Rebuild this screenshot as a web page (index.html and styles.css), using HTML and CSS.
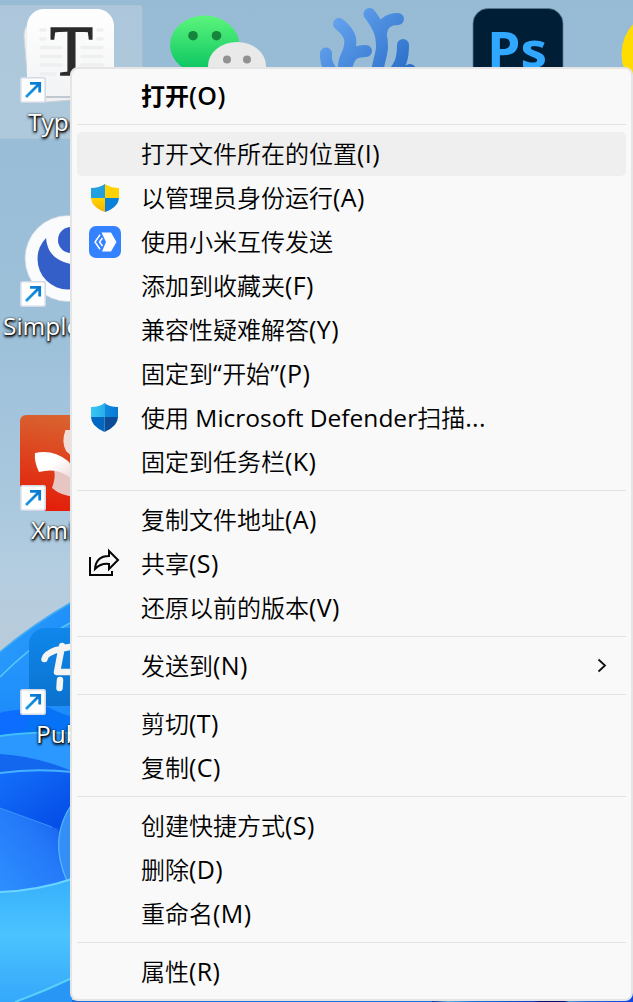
FILE: index.html
```html
<!DOCTYPE html>
<html lang="zh-CN">
<head>
<meta charset="utf-8">
<title>桌面</title>
<link rel="stylesheet" href="styles.css">
</head>
<body>
<main class="desktop">
<svg class="wallpaper" viewBox="0 0 633 1002" aria-hidden="true">
  <defs>
    <linearGradient id="sky" x1="0" y1="0" x2="0" y2="1"><stop offset="0" stop-color="#97bbd5"/><stop offset=".35" stop-color="#9ec1da"/><stop offset=".5" stop-color="#a9c8de"/><stop offset=".57" stop-color="#b4cde0"/><stop offset=".65" stop-color="#b9cbda"/></linearGradient>
    <linearGradient id="petalA" x1="0" y1="0" x2=".4" y2="1"><stop offset="0" stop-color="#2b9dfc"/><stop offset="1" stop-color="#0b7bf5"/></linearGradient>
    <linearGradient id="petalB" x1="0" y1="0" x2="0" y2="1"><stop offset="0" stop-color="#2a9cfb"/><stop offset="1" stop-color="#1684fa"/></linearGradient>
    <linearGradient id="petalC" x1="0" y1="0" x2=".5" y2="1"><stop offset="0" stop-color="#1470fb"/><stop offset="1" stop-color="#0041e0"/></linearGradient>
    <linearGradient id="petalD" x1="0" y1="1" x2="1" y2="0"><stop offset="0" stop-color="#2e91ff"/><stop offset=".6" stop-color="#2478f8"/><stop offset="1" stop-color="#1157ea"/></linearGradient>
    <linearGradient id="petalE" x1="0" y1="0" x2="0" y2="1"><stop offset="0" stop-color="#37b0fd"/><stop offset=".45" stop-color="#4bc3fe"/><stop offset="1" stop-color="#35a8fb"/></linearGradient>
    <linearGradient id="wechat" x1="0" y1="0" x2="0" y2="1"><stop offset="0" stop-color="#5cf57c"/><stop offset="1" stop-color="#05c160"/></linearGradient>
    <linearGradient id="coral" gradientUnits="userSpaceOnUse" x1="330" y1="10" x2="400" y2="80"><stop offset="0" stop-color="#6aa8f2"/><stop offset="1" stop-color="#2a6ec8"/></linearGradient>
    <linearGradient id="xmind" x1=".3" y1="0" x2=".1" y2="1"><stop offset="0" stop-color="#d9622f"/><stop offset="1" stop-color="#e41a08"/></linearGradient>
    <linearGradient id="pub" x1="0" y1="0" x2="0" y2="1"><stop offset="0" stop-color="#0f87ec"/><stop offset="1" stop-color="#0b72cd"/></linearGradient>
    <linearGradient id="arrow" x1="0" y1="1" x2="1" y2="0"><stop offset="0" stop-color="#1d9ce0"/><stop offset="1" stop-color="#0878d2"/></linearGradient>
    <linearGradient id="paper" x1="0" y1="0" x2="0" y2="1"><stop offset="0" stop-color="#fff"/><stop offset="1" stop-color="#f2f3f4"/></linearGradient>
    <linearGradient id="leaf" x1="0" y1="0" x2="1" y2="1"><stop offset=".4" stop-color="#fff"/><stop offset="1" stop-color="#e9cfcc"/></linearGradient>
    <linearGradient id="edge"><stop offset="0" stop-color="#0a2ca0"/><stop offset=".08" stop-color="#5bb0d8"/><stop offset=".2" stop-color="#1d6de0"/><stop offset=".5" stop-color="#0a3ec8"/><stop offset=".54" stop-color="#0a1070"/><stop offset=".66" stop-color="#0a1070"/><stop offset=".68" stop-color="#4a9ad0"/><stop offset=".78" stop-color="#2262d8"/><stop offset="1" stop-color="#0a40e8"/></linearGradient>
    <g id="shortcut">
      <rect x=".8" y=".8" width="24.4" height="24.4" rx="1.5" fill="#fff" stroke="#d3d9e7" stroke-width="1.6"/>
      <path d="M6 20 19.5 6.5M10 6.3H19.7V15.5" fill="none" stroke="url(#arrow)" stroke-width="2.8"/>
    </g>
  </defs>
  <rect width="633" height="1002" fill="url(#sky)"/>

  <path d="M0 652Q32 625 72 602V1002H0Z" fill="url(#petalA)"/>
  <path d="M0 652Q32 625 72 602" fill="none" stroke="#42adf5" stroke-width="1.5"/>
  <path d="M0 677Q36 641 72 622V760H0Z" fill="url(#petalB)"/>
  <path d="M0 677Q36 641 72 622" fill="none" stroke="#58c4fb" stroke-width="1.5"/>
  <path d="M0 713Q35 704 72 717V790H0Z" fill="#0c6dff"/>
  <path d="M40 704 72 718V734H20Z" fill="#0672f5"/>
  <path d="M0 736Q32 731 72 733V775H0Z" fill="#2a98ff"/>
  <path d="M0 736Q32 731 72 733" fill="none" stroke="#42bdfa" stroke-width="2"/>
  <path d="M0 754Q36 756 72 771V782H0Z" fill="#1367ef"/>
  <path d="M0 773Q35 768 72 772V880H0Z" fill="url(#petalC)"/>
  <path d="M0 773Q35 768 72 772" fill="none" stroke="#45b2ff" stroke-width="2"/>
  <path d="M0 808 58 829 72 900H0Z" fill="url(#petalD)"/>
  <path d="M0 808 52 827" stroke="#3794ff" stroke-width="1"/>
  <path d="M72 804Q48 838 67 881L72 878Z" fill="#338ff6"/>
  <path d="M72 804Q48 838 67 881" fill="none" stroke="#54b5fc" stroke-width="1.3"/>
  <path d="M0 892Q36 891 72 879V1002H0Z" fill="url(#petalE)"/>
  <path d="M0 892Q36 891 72 879" fill="none" stroke="#6ad5ff" stroke-width="2"/>
  <path d="M15 1002Q45 991 72 978V1002Z" fill="#2896f4"/>
  <path d="M15 1002Q45 991 72 978" fill="none" stroke="#5bd0fb" stroke-width="2"/>
  <rect x="72" y="1000" width="364" height="2" fill="#1671e0"/>
  <rect x="432" y="1000" width="201" height="2" fill="url(#edge)"/>
  <path d="M633 990V1002H622Z" fill="#0a48e8"/>

  <rect x="-4" y="5.5" width="146" height="133" rx="2" fill="#c8d5e2" fill-opacity=".45" stroke="#b4c5d3" stroke-opacity=".6"/>
  <rect x="26" y="16" width="84" height="84" rx="17" fill="#eef0f1" stroke="#cfd5da" transform="rotate(-5 68 58)"/>
  <rect x="27" y="11" width="87" height="87" rx="17" fill="#c1c9d0"/>
  <rect x="27" y="9" width="87" height="87" rx="17" fill="url(#paper)"/>
  <path d="M41 30h4M98 30h4M41 39h4M98 39h4M41 47.500h20M82 47.500h20M41 56.500h20M82 56.500h20M41 65h20M82 65h20M41 74h14M82 74h20" stroke="#eeeff0" stroke-width="3.5" stroke-linecap="round"/>
  <text class="typora" x="50" y="75" textLength="43" lengthAdjust="spacingAndGlyphs">T</text>

  <ellipse cx="204.700" cy="45" rx="34.700" ry="29.500" fill="url(#wechat)"/>
  <circle cx="193" cy="35.700" r="4.800" fill="#16843d"/><circle cx="216.500" cy="35.700" r="4.800" fill="#16843d"/>
  <ellipse cx="237" cy="66" rx="29" ry="24" fill="#e9e9e9"/>
  <circle cx="227" cy="59.500" r="4" fill="#919191"/><circle cx="247" cy="59.500" r="4" fill="#919191"/>

  <g fill="none" stroke="url(#coral)" stroke-width="12" stroke-linecap="round">
    <path d="M339 24C353 35 351 43 349 50C346 58 342 64 344 76M366 51C355 51 350 54 347 65"/>
    <path d="M326 53.500C325 68 334 76 347 82"/>
    <path d="M369.500 14C381 29 382 37 382 48C381 59 377 64 376 80M398 19C387 19 381 25 381 34"/>
    <path d="M403 45C403 58 401 65 392 75M410 70L396 78"/>
  </g>
  <rect x="473" y="8.500" width="90" height="90" rx="15" fill="#001e36" stroke="#5b7b91" stroke-width=".7"/>
  <text class="ps" x="487" y="67.500" textLength="60" lengthAdjust="spacingAndGlyphs">Ps</text>
  <circle cx="666" cy="54" r="44.500" fill="#fd0"/>

  <circle cx="68" cy="258.500" r="43" fill="#fafbfc" stroke="#c9d3dc" stroke-width=".7"/>
  <circle cx="68" cy="259" r="30.500" fill="#345fc9"/>
  <path d="M46 232C45 254 57 263 78 265L84 258 62 226Z" fill="#fafbfc"/>
  <circle cx="71" cy="240" r="13" fill="#345fc9"/>

  <rect x="20" y="415" width="96" height="96" rx="6" fill="url(#xmind)"/>
  <path d="M52 488Q56 477 54 470L76 472V497Q61 496 52 488" fill="#e7c5c2"/>
  <path d="M65.500 430Q61 442 66 451L76 460V430Z" fill="#f1dcd8"/>
  <path d="M35 453Q53 449 68 461L76 471V484Q62 466 39 472Q34 462 35 453Z" fill="url(#leaf)"/>

  <rect x="29" y="628" width="78" height="78" rx="16" fill="url(#pub)"/>
  <path d="M44.500 659Q45 654 56 650M62 646L57 672H75M57 650Q67 647 76 646M60 680L59.500 688" fill="none" stroke="#f4f4f2" stroke-width="6.500" stroke-linecap="round" stroke-linejoin="round"/>

  <use href="#shortcut" x="20" y="77"/>
  <use href="#shortcut" x="20" y="281"/>
  <use href="#shortcut" x="20" y="485"/>
  <use href="#shortcut" x="20" y="689"/>
</svg>
<span class="label label-typora">Typora</span>
<span class="label label-simple">Simple</span>
<span class="label label-xmind">Xmind</span>
<span class="label label-pub">Pub</span>

<nav class="menu">
  <div class="item item-default"><span class="icon"></span><span>打开<b class="latin">(O)</b></span></div>
  <hr class="separator">
  <div class="item item-hover"><span class="icon"></span><span>打开文件所在的位置<span class="latin">(I)</span></span></div>
  <div class="item"><span class="icon"><svg width="32" height="32" viewBox="0 0 32 32">
    <defs><clipPath id="uac"><path d="M16 2Q22 6 30 6V15Q30 25 16 30Q2 25 2 15V6Q10 6 16 2Z"/></clipPath><linearGradient id="ub" x1="0" y1="0" x2="0" y2="1"><stop offset="0" stop-color="#28a4e2"/><stop offset="1" stop-color="#0875d3"/></linearGradient><linearGradient id="uy" x1="0" y1="0" x2="0" y2="1"><stop offset="0" stop-color="#ffd500"/><stop offset="1" stop-color="#f8b000"/></linearGradient></defs>
    <g clip-path="url(#uac)"><path d="M2 2h14v14H2z" fill="#22a0e0"/><path d="M16 16h14v14H16z" fill="#0b80d8"/><path d="M16 2h14v14H16z" fill="#ffd200"/><path d="M2 16h14v14H2z" fill="url(#uy)"/></g>
    </svg></span><span>以管理员身份运行<span class="latin">(A)</span></span></div>
  <div class="item"><span class="icon"><svg width="32" height="32" viewBox="0 0 32 32">
    <rect width="32" height="32" rx="7" fill="#3482ff"/><path d="M12.500 6.500H22L27.500 16 22 25.500H13L17 16Z" fill="#fff"/><path d="M11 8.800 6 16 11 23.200M13.500 12 10.500 16 13.500 20" fill="none" stroke="#fff" stroke-width="1.500"/>
    </svg></span><span>使用小米互传发送</span></div>
  <div class="item"><span class="icon"></span><span>添加到收藏夹<span class="latin">(F)</span></span></div>
  <div class="item"><span class="icon"></span><span>兼容性疑难解答<span class="latin">(Y)</span></span></div>
  <div class="item"><span class="icon"></span><span>固定到<span class="latin">“</span>开始<span class="latin">”(P)</span></span></div>
  <div class="item"><span class="icon"><svg width="32" height="32" viewBox="0 0 32 32">
    <defs><clipPath id="def"><path d="M15.500 1Q20 5 29 5V15Q29 24 15.500 30Q2 24 2 15V5Q11 5 15.500 1Z"/></clipPath><linearGradient id="dt"><stop offset="0" stop-color="#38c8f4"/><stop offset=".5" stop-color="#28aee9"/><stop offset=".51" stop-color="#138be0"/><stop offset="1" stop-color="#0779d5"/></linearGradient></defs>
    <g clip-path="url(#def)"><path d="M2 1h27v14H2z" fill="url(#dt)"/><path d="M2 15h13.500v15H2z" fill="#0068c2"/><path d="M15.500 15H29v15H15.500z" fill="#0c4b97"/></g>
    </svg></span><span>使用<span class="latin product"> Microsoft Defender</span>扫描<span class="latin">...</span></span></div>
  <div class="item"><span class="icon"></span><span>固定到任务栏<span class="latin">(K)</span></span></div>
  <hr class="separator">
  <div class="item"><span class="icon"></span><span>复制文件地址<span class="latin">(A)</span></span></div>
  <div class="item"><span class="icon"><svg width="32" height="32" viewBox="0 0 32 32" fill="none" stroke="#050505" stroke-width="2">
    <path d="M1 9V27H23V23"/><path d="M20 3 29 12 20 21V16Q12 15 6 21Q7 8 20 8Z"/>
    </svg></span><span>共享<span class="latin">(S)</span></span></div>
  <div class="item"><span class="icon"></span><span>还原以前的版本<span class="latin">(V)</span></span></div>
  <hr class="separator">
  <div class="item"><span class="icon"></span><span>发送到<span class="latin">(N)</span></span><svg class="chevron" width="10" height="16" viewBox="0 0 10 16"><path d="M1.500 1.500 8 7.500 1.500 13.500" fill="none" stroke="#111" stroke-width="1.800"/></svg></div>
  <hr class="separator">
  <div class="item"><span class="icon"></span><span>剪切<span class="latin">(T)</span></span></div>
  <div class="item"><span class="icon"></span><span>复制<span class="latin">(C)</span></span></div>
  <hr class="separator">
  <div class="item"><span class="icon"></span><span>创建快捷方式<span class="latin">(S)</span></span></div>
  <div class="item"><span class="icon"></span><span>删除<span class="latin">(D)</span></span></div>
  <div class="item"><span class="icon"></span><span>重命名<span class="latin">(M)</span></span></div>
  <hr class="separator">
  <div class="item"><span class="icon"></span><span>属性<span class="latin">(R)</span></span></div>
</nav>
</main>
</body>
</html>
```
FILE: styles.css
```css
* { box-sizing: border-box; }
body { margin: 0; overflow: hidden; }
.desktop {
  position: relative;
  width: 633px;
  height: 1002px;
  padding: 67px 0 1px 70px;
  overflow: hidden;
  font-family: "Noto Sans CJK SC", sans-serif;
}
.wallpaper { position: absolute; left: 0; top: 0; width: 633px; height: 1002px; }
.typora { font: 71px "Liberation Serif", serif; fill: #2b2b2b; stroke: #2b2b2b; stroke-width: 1.5px; }
.ps { font: bold 50px "Open Sans", sans-serif; fill: #31a8ff; }
.label {
  position: absolute;
  font: 24.5px/32px "Open Sans", sans-serif;
  color: #fff;
  white-space: nowrap;
  text-shadow: 1px 1px 2px #000, 0 2px 3px rgba(0, 0, 0, .9), 0 0 2px rgba(0, 0, 0, .7);
}
.label-typora { left: 28px; top: 106px; }
.label-simple { left: 3px; top: 310px; }
.label-xmind { left: 31px; top: 514px; }
.label-pub { left: 36px; top: 718px; }
.menu {
  position: relative;
  width: 563px;
  height: 934px;
  padding: 5px;
  border: 2px solid #e5e5e5;
  border-radius: 8px;
  background: #f9f9f9;
  color: #000;
}
.item {
  display: flex;
  align-items: center;
  height: 44px;
  padding: 0 19px 0 12px;
  border-radius: 5px;
  font-size: 24px;
  font-weight: 350;
  line-height: 42px;
  white-space: nowrap;
}
.item > span:not(.icon) { padding-bottom: 2px; }
.item-default { font-weight: 700; }
.item-hover { background: #efefef; }
.icon { width: 32px; height: 32px; margin-right: 20px; flex: none; }
.icon svg { display: block; }
.latin { font-family: "Open Sans", sans-serif; font-size: 25px; font-weight: 400; line-height: 1; letter-spacing: .4px; }
.item-default .latin { font-weight: 600; }
.latin.product { font-size: 24.5px; letter-spacing: 0; }
.chevron { margin-left: auto; }
.separator { height: 1px; margin: 6px 0 7px; border: 0; background: #e3e3e3; }
```
